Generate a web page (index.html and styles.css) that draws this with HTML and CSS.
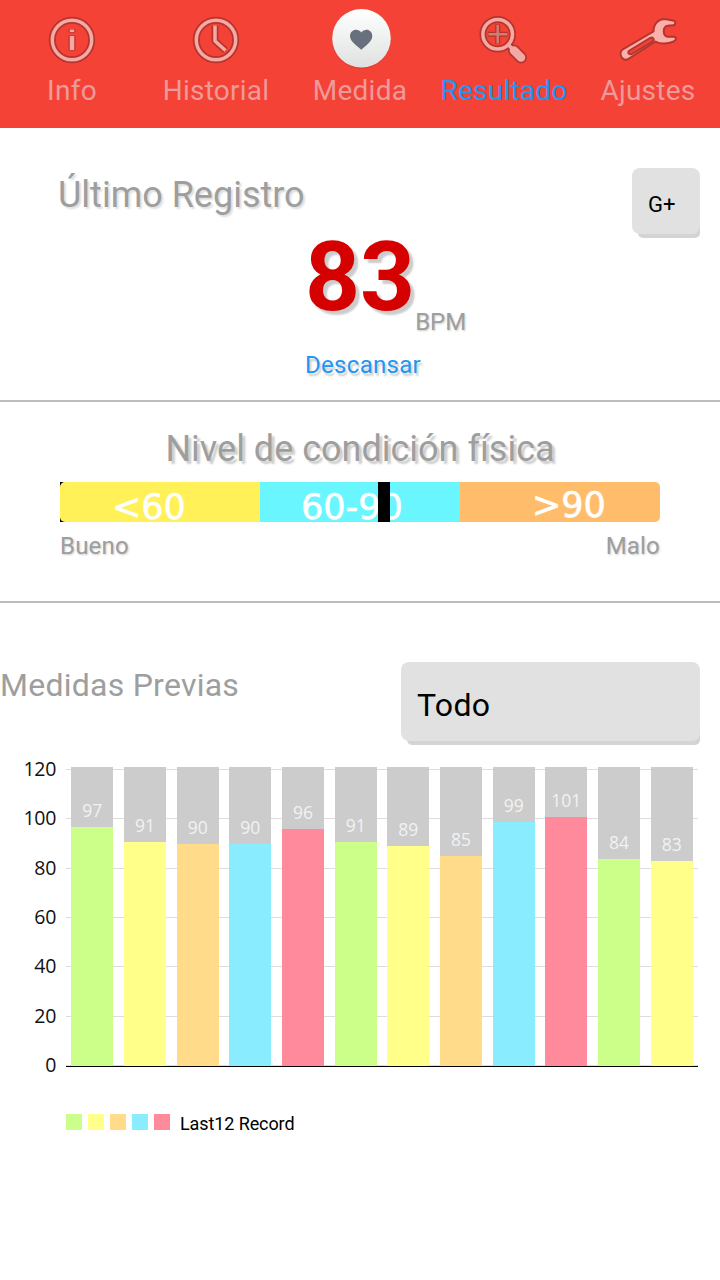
FILE: index.html
```html
<!DOCTYPE html>
<html lang="es">
<head>
    <meta charset="UTF-8">
    <meta name="viewport" content="width=device-width, initial-scale=1.0">
    <title>Resultado</title>
    <link rel="stylesheet" href="styles.css">
</head>
<body>
    <!-- Top tabs -->
    <nav class="tabs">
        <a class="tab">
            <svg class="tab-icon" viewBox="0 0 60 60">
                <g class="icon-edge">
                    <circle cx="30" cy="30" r="19.7"/>
                    <path d="M30 19v3.500M30 25.500v15"/>
                </g>
                <g class="icon-line">
                    <circle cx="30" cy="30" r="19.7"/>
                    <path class="stem" d="M30 19.500v2.500M30 26v14"/>
                </g>
            </svg>
            <span class="tab-label">Info</span>
        </a>
        <a class="tab">
            <svg class="tab-icon" viewBox="0 0 60 60">
                <g class="icon-edge">
                    <circle cx="30" cy="30" r="19.7"/>
                    <path d="M29 15.500V31l10.500 9.500"/>
                </g>
                <g class="icon-line">
                    <circle cx="30" cy="30" r="19.7"/>
                    <path d="M29 15.500V31l10.500 9.500"/>
                </g>
            </svg>
            <span class="tab-label">Historial</span>
        </a>
        <a class="tab">
            <svg class="tab-icon" viewBox="0 0 60 60">
                <defs>
                    <linearGradient id="disc" x1="0" y1="0" x2="0" y2="1">
                        <stop offset="0" stop-color="#ffffff"/>
                        <stop offset="1" stop-color="#dfe1e1"/>
                    </linearGradient>
                </defs>
                <circle cx="31.500" cy="29.500" r="29.500" fill="#d93c31" opacity=".6"/>
                <circle cx="31.500" cy="28.300" r="29.300" fill="url(#disc)"/>
                <path d="M31.300 39.800C28 36.300 20 32 20 26c0-6.500 8-8.500 11.300-3.500C35 17.500 42.300 19.500 42.300 26c0 6-7.700 10.300-11 13.800z" fill="#69707d"/>
            </svg>
            <span class="tab-label">Medida</span>
        </a>
        <a class="tab active">
            <svg class="tab-icon" viewBox="0 0 60 60">
                <g class="icon-edge">
                    <circle cx="23.700" cy="24.300" r="14.800"/>
                    <path d="M34.500 35l5 5"/>
                    <path class="handle" d="M40 40.500l7 7"/>
                </g>
                <path class="cross-edge" d="M23.700 14.500v19.600M13.900 24.300h19.600"/>
                <path class="cross" d="M23.700 15v18.600M14.400 24.300H33"/>
                <g class="icon-line">
                    <circle cx="23.700" cy="24.300" r="14.800"/>
                    <path d="M34.500 35l5 5"/>
                    <path class="handle" d="M40 40.500l7 7"/>
                </g>
            </svg>
            <span class="tab-label">Resultado</span>
        </a>
        <a class="tab">
            <svg class="tab-icon" viewBox="0 0 60 60">
                <path class="wrench" d="M56 10.800C57.500 11 58 15 55.500 15.200L49.500 15.800C44.500 17 44.500 25.500 49.500 26.800L56 26.800C59 27 58.500 30.500 55 31.800C50 33.800 42.500 34.500 37.500 31.500L10.500 48.800C4.500 52.500-.5 43.500 4.800 39.300L35.500 21.500C35.500 14 40.500 9 47 9z"/>
                <path class="slot" d="M11.500 40.500l20.500-12.500c3.500-1.500 5 1.800 2 4L14 43.800c-3 1.500-5-1.300-2.500-3.300z"/>
            </svg>
            <span class="tab-label">Ajustes</span>
        </a>
    </nav>

    <!-- Last record -->
    <section class="last-record">
        <div class="record-header">
            <h2 class="title">Último Registro</h2>
            <button class="btn share-btn">G+</button>
        </div>
        <div class="reading">
            <span class="bpm">83</span>
            <span class="unit">BPM</span>
        </div>
        <div class="state">Descansar</div>
    </section>

    <!-- Fitness level -->
    <section class="fitness">
        <h2 class="title">Nivel de condición física</h2>
        <div class="level-bar">
            <div class="level good">&lt;60</div>
            <div class="level normal">60-90</div>
            <div class="level bad">&gt;90</div>
            <div class="marker"></div>
        </div>
        <div class="level-ends">
            <span>Bueno</span>
            <span>Malo</span>
        </div>
    </section>

    <!-- Previous records -->
    <section class="previous">
        <div class="previous-header">
            <h3 class="previous-title">Medidas Previas</h3>
            <button class="btn filter-btn">Todo</button>
        </div>
        <div class="chart">
            <div class="axis">
                <span>120</span>
                <span>100</span>
                <span>80</span>
                <span>60</span>
                <span>40</span>
                <span>20</span>
                <span>0</span>
            </div>
            <div class="plot">
                <div class="column"><span class="value">97</span><div class="bar green" style="--bpm: 97"></div></div>
                <div class="column"><span class="value">91</span><div class="bar yellow" style="--bpm: 91"></div></div>
                <div class="column"><span class="value">90</span><div class="bar orange" style="--bpm: 90"></div></div>
                <div class="column"><span class="value">90</span><div class="bar blue" style="--bpm: 90"></div></div>
                <div class="column"><span class="value">96</span><div class="bar red" style="--bpm: 96"></div></div>
                <div class="column"><span class="value">91</span><div class="bar green" style="--bpm: 91"></div></div>
                <div class="column"><span class="value">89</span><div class="bar yellow" style="--bpm: 89"></div></div>
                <div class="column"><span class="value">85</span><div class="bar orange" style="--bpm: 85"></div></div>
                <div class="column"><span class="value">99</span><div class="bar blue" style="--bpm: 99"></div></div>
                <div class="column"><span class="value">101</span><div class="bar red" style="--bpm: 101"></div></div>
                <div class="column"><span class="value">84</span><div class="bar green" style="--bpm: 84"></div></div>
                <div class="column"><span class="value">83</span><div class="bar yellow" style="--bpm: 83"></div></div>
            </div>
        </div>
        <div class="legend">
            <i class="swatch green"></i>
            <i class="swatch yellow"></i>
            <i class="swatch orange"></i>
            <i class="swatch blue"></i>
            <i class="swatch red"></i>
            <span class="legend-label">Last12 Record</span>
        </div>
    </section>
</body>
</html>
```
FILE: styles.css
```css
* {
    margin: 0;
    padding: 0;
    box-sizing: border-box;
}

body {
    font-family: Roboto, sans-serif;
    background-color: #fff;
    color: #9e9e9e;
}

/* Tabs */
.tabs {
    display: flex;
    height: 128px;
    background-color: #f44336;
}

.tab {
    flex: 1;
    display: flex;
    flex-direction: column;
    align-items: center;
    padding-top: 10px;
    color: #ef9a9a;
}

.tab-icon {
    width: 60px;
    height: 60px;
    overflow: visible;
    fill: none;
    stroke-linejoin: round;
}

.tab-label {
    margin-top: 4px;
    font-size: 28px;
    line-height: 33px;
    letter-spacing: 0.25px;
}

.active {
    color: #2196f3;
}

.icon-edge {
    stroke: #b5352d;
    stroke-width: 7px;
}

.icon-line {
    stroke: #f5a9a4;
    stroke-width: 3.5px;
}

.stem {
    stroke-width: 4.5px;
}

.handle {
    stroke-linecap: round;
}

.icon-edge .handle {
    stroke-width: 12px;
}

.icon-line .handle {
    stroke-width: 8.5px;
}

.cross-edge {
    stroke: #b5352d;
    stroke-width: 5px;
}

.cross {
    stroke: #cf7e77;
    stroke-width: 2.5px;
}

.wrench {
    fill: #fbb0ab;
    stroke: #b5352d;
    stroke-width: 2px;
}

.slot {
    fill: #f44336;
    stroke: #b5352d;
    stroke-width: 2px;
}

/* Shared */
.title {
    font-size: 36px;
    font-weight: normal;
    line-height: 42px;
    text-shadow: 2px 2px 2px #ddd;
}

.btn {
    border: none;
    border-radius: 8px;
    background-color: #e1e1e1;
    box-shadow: 3px 7px 0 -3px #d4d4d4;
    font-family: Roboto, sans-serif;
    color: #000;
    text-align: left;
    padding-left: 16px;
}

/* Last record */
.last-record {
    height: 274px;
    border-bottom: 2px solid #bdbdbd;
}

.record-header {
    display: flex;
    justify-content: space-between;
    height: 106px;
    padding: 40px 20px 0 58px;
}

.record-header .title {
    padding-top: 6px;
}

.share-btn {
    width: 68px;
    height: 66px;
    padding-top: 6px;
    font-size: 22px;
}

.reading {
    display: flex;
    align-items: flex-end;
    height: 102px;
    padding-left: 305px;
}

.bpm {
    margin-bottom: 3px;
    font-size: 96px;
    font-weight: bold;
    line-height: 112px;
    color: #d50000;
    text-shadow: 4px 4px 2px #ccc;
}

.unit {
    font-size: 24px;
    line-height: 28px;
    text-shadow: 1px 1px 2px #ccc;
}

.state {
    padding: 15px 0 0 305px;
    font-size: 24px;
    line-height: 28px;
    letter-spacing: 0.3px;
    color: #2196f3;
    text-shadow: 2px 3px 2px #ccc;
}

/* Fitness level */
.fitness {
    height: 201px;
    padding: 26px 60px 0;
    border-bottom: 2px solid #bdbdbd;
}

.fitness .title {
    text-align: center;
    text-shadow: 3px 3px 2px #ccc;
}

.level-bar {
    position: relative;
    display: flex;
    height: 40px;
    margin-top: 12px;
    background: linear-gradient(to right, #000 50%, #fff 50%);
}

.level {
    width: 200px;
    font-family: "DejaVu Sans", sans-serif;
    font-size: 35px;
    line-height: 51px;
    color: #fff;
    -webkit-text-stroke: 0.6px #fff;
}

.good {
    padding-left: 52px;
    background-color: #fff157;
    border-radius: 5px 0 0 5px;
}

.normal {
    padding-left: 41px;
    background-color: #6af6ff;
}

.bad {
    padding-left: 72px;
    line-height: 47px;
    background-color: #ffbd6b;
    border-radius: 0 5px 5px 0;
}

.marker {
    position: absolute;
    left: 318px;
    width: 12px;
    height: 40px;
    background-color: #000;
}

.level-ends {
    display: flex;
    justify-content: space-between;
    padding-top: 10px;
    font-size: 24px;
    line-height: 28px;
    letter-spacing: 0.2px;
    text-shadow: 1px 1px 2px #ccc;
}

/* Previous records */
.previous-header {
    display: flex;
    justify-content: space-between;
    height: 164px;
    padding: 59px 20px 0 0;
}

.previous-title {
    padding-top: 4px;
    font-size: 32px;
    font-weight: normal;
    line-height: 38px;
    letter-spacing: 0.25px;
}

.filter-btn {
    width: 299px;
    height: 79px;
    padding-top: 7px;
    font-size: 32px;
    letter-spacing: 0.3px;
}

.chart {
    display: flex;
    gap: 10px;
    height: 300px;
    font-family: "Open Sans", sans-serif;
}

.axis {
    display: flex;
    flex-direction: column;
    justify-content: space-between;
    width: 56px;
    height: 320px;
    margin-top: -10px;
    font-size: 19.5px;
    line-height: 24px;
    letter-spacing: -0.3px;
    text-align: right;
    color: #111;
}

.plot {
    display: flex;
    width: 632px;
    border-bottom: 1px solid #000;
    background: repeating-linear-gradient(to bottom, #ddd 0 1px, transparent 1px 49.333px) 0 2px no-repeat;
}

.column {
    flex: 1;
    display: flex;
    flex-direction: column;
    justify-content: flex-end;
    margin: 0 5.27px;
    background-color: #ccc;
}

.value {
    align-self: center;
    margin-bottom: 6px;
    font-size: 17.5px;
    line-height: 22px;
    color: #f2f2f2;
}

.bar {
    height: calc(var(--bpm) * 2.467px);
}

.green {
    background-color: #ccff8a;
}

.yellow {
    background-color: #ffff8a;
}

.orange {
    background-color: #ffdb8a;
}

.blue {
    background-color: #8aedff;
}

.red {
    background-color: #ff8a9b;
}

.legend {
    display: flex;
    gap: 6px;
    padding: 47px 0 0 66px;
}

.swatch {
    width: 16px;
    height: 16px;
}

.legend-label {
    margin: -1px 0 0 4px;
    font-size: 18px;
    line-height: 22px;
    letter-spacing: -0.1px;
    color: #000;
}
```
